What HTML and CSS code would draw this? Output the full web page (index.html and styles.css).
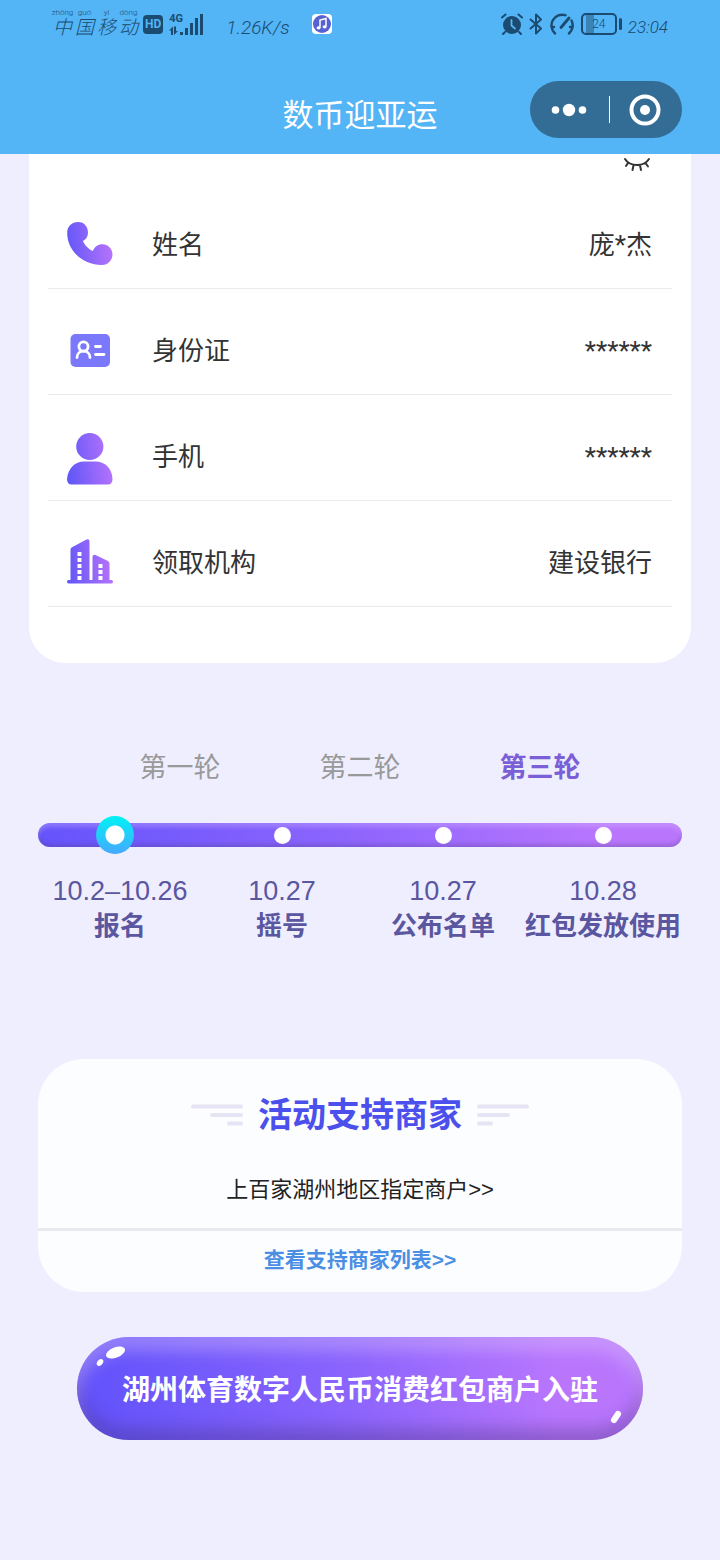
FILE: index.html
```html
<!DOCTYPE html>
<html lang="zh-CN">
<head>
<meta charset="utf-8">
<meta name="viewport" content="width=device-width, initial-scale=1">
<title>数币迎亚运</title>
<link rel="stylesheet" href="styles.css">
</head>
<body>
<header class="header">
  <div class="status">
    <div class="status-group">
      <div class="carrier">
        <span class="syllable"><small>zhōng</small><b>中</b></span>
        <span class="syllable"><small>guó</small><b>国</b></span>
        <span class="syllable"><small>yí</small><b>移</b></span>
        <span class="syllable"><small>dòng</small><b>动</b></span>
      </div>
      <span class="hd">HD</span>
      <div class="signal">
        <span class="signal-type">4G</span>
        <svg class="signal-bars" width="34" height="22" viewBox="0 0 34 22" fill="#1b4b70">
          <path d="M0 17.500l4-4V22H2v-4.500zM5 13.500h2V18h2l-4 4zM11 19h3v3h-3zM16 15h3v7h-3zM21 10h3v12h-3zM26 5h3v17h-3zM31 1h3v21h-3z"/>
        </svg>
      </div>
      <span class="speed">1.26K/s</span>
      <svg class="music" width="20" height="20" viewBox="0 0 20 20">
        <rect width="20" height="20" rx="4" fill="#fff"/>
        <circle cx="10" cy="10" r="9" fill="#5662d2"/>
        <path d="M8 13.500V6l6-1.500v8" fill="none" stroke="#fff" stroke-width="1.500"/>
        <ellipse cx="6.600" cy="13.800" rx="2" ry="1.600" fill="#fff"/>
        <ellipse cx="12.600" cy="12.800" rx="2" ry="1.600" fill="#fff"/>
      </svg>
    </div>
    <div class="status-group status-right">
      <svg width="22" height="22" viewBox="0 0 22 22" fill="none" stroke="#1b4b70" stroke-linecap="round">
        <circle cx="11" cy="12" r="9" fill="#1b4b70" stroke="none"/>
        <path d="M1 4.500L4.500 1.500M21 4.500L17.500 1.500M4 19l-2 2M18 19l2 2" stroke-width="2"/>
        <path d="M10.500 7v5.500l3.500 3" stroke="#53b4f6" stroke-width="1.800"/>
      </svg>
      <svg width="14" height="22" viewBox="0 0 14 22" fill="none" stroke="#1b4b70" stroke-width="2" stroke-linecap="round" stroke-linejoin="round">
        <path d="M1.500 6.500L12 15.500 7 20.500V1.500L12 6.500 1.500 15.500"/>
      </svg>
      <svg width="26" height="22" viewBox="0 0 26 22" fill="none" stroke="#1b4b70" stroke-width="2.400" stroke-linecap="round">
        <path d="M6 20.500A10.800 10.800 0 0 1 16.500 2.200M22.500 7.500A10.800 10.800 0 0 1 20 20.500M2.500 14h2.500M21 14h2.500"/>
        <path d="M12 14.500L20 5" stroke-width="2.800"/>
      </svg>
      <div class="battery"><span class="battery-body">24</span><i class="battery-tip"></i></div>
      <time class="clock">23:04</time>
    </div>
  </div>
  <div class="nav">
    <h1 class="nav-title">数币迎亚运</h1>
    <div class="capsule">
      <button class="capsule-button" type="button" aria-label="更多">
        <svg width="36" height="14" viewBox="0 0 36 14" fill="#fff"><circle cx="4.500" cy="7" r="3.800"/><circle cx="18" cy="7" r="6.200"/><circle cx="31.500" cy="7" r="3.800"/></svg>
      </button>
      <i class="capsule-line"></i>
      <button class="capsule-button" type="button" aria-label="关闭">
        <svg width="32" height="32" viewBox="0 0 32 32" fill="none"><circle cx="16" cy="16" r="13.500" stroke="#fff" stroke-width="4"/><circle cx="16" cy="16" r="5" fill="#fff"/></svg>
      </button>
    </div>
  </div>
</header>
<main>
  <section class="profile">
    <button class="eye" type="button" aria-label="显示信息">
      <svg width="28" height="16" viewBox="0 0 28 16" fill="none" stroke="#333" stroke-width="2" stroke-linecap="round"><path d="M2 3C7 11 21 11 26 3M5 7L3 10M10.500 9.500L9.500 14M17 9.500l1 4.500M22.500 7l2.500 3.500"/></svg>
    </button>
    <ul class="rows">
      <li class="row">
        <svg class="row-icon" width="48" height="48" viewBox="0 0 48 48">
          <defs><linearGradient id="violet" gradientUnits="userSpaceOnUse" x1="1" y1="30" x2="47" y2="24"><stop offset="0" stop-color="#6257f8"/><stop offset="1" stop-color="#b974fb"/></linearGradient></defs>
          <path fill="url(#violet)" d="M1.200 13C1.200 6 6 2 12 2C18.500 2 22 7 22 12.500C22 16.500 20 19.500 17 21C18.500 25 22.500 29 26.800 31C28.500 27 32 24.300 36.500 24.300C42 24.300 46.500 29 46.500 34.500C46.500 40 42 45 36 45C17 45 1.200 31 1.200 13Z"/>
        </svg>
        <span class="label">姓名</span><span class="value">庞*杰</span>
      </li>
      <li class="row">
        <svg class="row-icon" width="48" height="48" viewBox="0 0 48 48">
          <rect x="4.500" y="8" width="39.500" height="33" rx="5" fill="#7b78fb"/>
          <g fill="none" stroke="#fff" stroke-width="2.800" stroke-linecap="round"><circle cx="17.500" cy="20.500" r="4.600"/><path d="M11 31.500C11 23 24 23 24 31.500M29.500 20.500h5M29.500 28.500h8.500"/></g>
        </svg>
        <span class="label">身份证</span><span class="value">******</span>
      </li>
      <li class="row">
        <svg class="row-icon" width="48" height="60" viewBox="0 -6 48 60" fill="url(#violet)">
          <circle cx="23.800" cy="14.500" r="13.600"/>
          <path d="M1 47C2 36 9 29.500 18 29.500H29.500C39 29.500 46 36 46.500 47C46.500 50.500 45 52.500 42 52.500H5.500C2.500 52.500 1 50.500 1 47Z"/>
        </svg>
        <span class="label">手机</span><span class="value">******</span>
      </li>
      <li class="row">
        <svg class="row-icon" width="48" height="48" viewBox="0 1 48 48">
          <path fill="url(#violet)" d="M4.500 12.500Q4.500 11 6 10.200L20.500 2.500Q23.500 1.500 23.500 4.500V43H26.500V19.500Q27 17 29.500 18L42 24Q43.500 25 43.500 26.500V43H45.500Q47 43 47 44.800Q47 46.500 45.500 46.500H2.500Q1 46.500 1 44.800Q1 43 2.500 43H4.500Z"/>
          <path fill="#fff" d="M11.500 15h4v4h-4zM11.500 21h4v4h-4zM11.500 27h4v4h-4zM11.500 33h4v4h-4zM11.500 39h4v4h-4zM32.500 27h4v4h-4zM32.500 33h4v4h-4zM32.500 39h4v4h-4z"/>
        </svg>
        <span class="label">领取机构</span><span class="value">建设银行</span>
      </li>
    </ul>
  </section>

  <nav class="rounds">
    <button class="round" type="button">第一轮</button>
    <button class="round" type="button">第二轮</button>
    <button class="round round-active" type="button">第三轮</button>
  </nav>

  <section class="timeline">
    <div class="track">
      <span class="current"></span><span class="dot"></span><span class="dot"></span><span class="dot"></span>
    </div>
    <ol class="steps">
      <li class="step"><span>10.2–10.26</span><strong>报名</strong></li>
      <li class="step"><span>10.27</span><strong>摇号</strong></li>
      <li class="step"><span>10.27</span><strong>公布名单</strong></li>
      <li class="step"><span>10.28</span><strong>红包发放使用</strong></li>
    </ol>
  </section>

  <section class="merchants">
    <div class="merchants-head">
      <svg width="54" height="24" viewBox="0 0 54 24" stroke="#e6e3f4" stroke-width="4" stroke-linecap="round"><path d="M3 3.500h48M22 12h29M39 20.500h12"/></svg>
      <h2 class="merchants-title">活动支持商家</h2>
      <svg width="54" height="24" viewBox="0 0 54 24" stroke="#e6e3f4" stroke-width="4" stroke-linecap="round"><path d="M3 3.500h48M3 12h29M3 20.500h12"/></svg>
    </div>
    <p class="merchants-text">上百家湖州地区指定商户&gt;&gt;</p>
    <a class="merchants-link" href="#">查看支持商家列表&gt;&gt;</a>
  </section>

  <button class="join" type="button">
    <svg class="shine shine-top" width="30" height="22" viewBox="0 0 30 22" fill="#fff"><ellipse cx="19.500" cy="7.500" rx="10" ry="5.200" transform="rotate(-22 19.500 7.500)"/><ellipse cx="4" cy="17.500" rx="3.800" ry="2.700" transform="rotate(-50 4 17.500)"/></svg>
    湖州体育数字人民币消费红包商户入驻
    <svg class="shine shine-bottom" width="12" height="14" viewBox="0 0 12 14" fill="none" stroke="#fff" stroke-width="6" stroke-linecap="round"><path d="M4 10L8 4"/></svg>
  </button>
</main>
</body>
</html>
```

FILE: styles.css
```css
* { box-sizing: border-box; }

body {
  margin: 0;
  min-height: 100vh;
  background: #efeeff;
  color: #333;
  font-family: Roboto, "Noto Sans CJK SC", sans-serif;
}

button {
  padding: 0;
  border: 0;
  background: none;
  color: inherit;
  font: inherit;
}

ul, ol, h1, h2, p { margin: 0; padding: 0; list-style: none; }
svg { display: block; flex: none; }

.header { background: #53b4f6; }

.status {
  display: flex;
  justify-content: space-between;
  height: 48px;
  padding: 0 52px;
  color: #1b4b70;
}
.status-group { display: flex; align-items: center; }
.status-right { gap: 6px; }
.carrier { display: flex; gap: 1px; font-weight: 300; }
.syllable { display: flex; flex-direction: column; align-items: center; width: 21px; }
.syllable small { font-size: 8px; line-height: 8px; white-space: nowrap; }
.syllable b { font-size: 19px; line-height: 22px; font-weight: 300; font-style: italic; }
.hd {
  margin-left: 4px;
  padding: 0 2px;
  border-radius: 4px;
  background: #1b4b70;
  color: #53b4f6;
  font-size: 12px;
  line-height: 19px;
  font-weight: 700;
}
.signal { display: grid; margin-left: 6px; }
.signal-type, .signal-bars { grid-area: 1 / 1; }
.signal-type { font-size: 11px; line-height: 11px; font-weight: 700; }
.speed { width: 64px; margin: 6px 22px 0 23px; font-size: 19px; font-weight: 300; font-style: italic; white-space: nowrap; }
.battery { display: flex; align-items: center; gap: 2px; }
.battery-body {
  width: 36px;
  border: 2px solid #1b4b70;
  border-radius: 5px;
  background: linear-gradient(90deg, transparent 3px, #3b83b5 3px 11px, transparent 11px);
  font-size: 12px;
  line-height: 18px;
  font-weight: 300;
  text-align: center;
}
.battery-tip { width: 3px; height: 12px; border-radius: 2px; background: #1b4b70; }
.clock { margin-top: 6px; font-size: 17px; font-weight: 300; font-style: italic; }

.nav {
  display: grid;
  grid-template-columns: 1fr auto 1fr;
  align-items: center;
  padding: 33px 38px 16px;
}
.nav-title { grid-column: 2; padding-top: 12px; color: #fff; font-size: 31px; line-height: 40px; font-weight: 400; }
.capsule {
  justify-self: end;
  display: flex;
  align-items: center;
  width: 152px;
  height: 57px;
  border-radius: 29px;
  background: #336d95;
}
.capsule-button { flex: 1; display: grid; place-items: center; height: 100%; }
.capsule-button:first-child { flex: 80; }
.capsule-button:last-child { flex: 71; padding-right: 2px; }
.capsule-line { width: 1px; height: 27px; background: #fff; }

.profile {
  display: flex;
  flex-direction: column;
  margin: 0 29px;
  padding: 0 19px 56px;
  border-radius: 0 0 36px 36px;
  background: #fff;
}
.eye { align-self: flex-end; height: 29px; margin-right: 21px; display: flex; align-items: flex-start; padding-top: 2px; }
.row {
  display: grid;
  grid-template-columns: 66px 1fr auto;
  align-items: center;
  column-gap: 20px;
  height: 106px;
  padding: 16px 20px 0 18px;
  border-bottom: 1px solid #ebebeb;
  font-size: 26px;
  line-height: 40px;
}
.label, .value { padding-top: 3px; }

.rounds {
  display: grid;
  grid-template-columns: repeat(3, 1fr);
  margin: 85px 90px 0;
  font-size: 27px;
  line-height: 40px;
  color: #999;
}
.round-active { color: #7a5fd6; font-weight: 700; }

.timeline { margin: 35px 38px 0; }
.track, .steps { display: grid; grid-template-columns: 164fr 160fr 162fr 158fr; justify-items: center; align-items: center; }
.track {
  grid-template-rows: 24px;
  border-radius: 12px;
  background: linear-gradient(90deg, #6554fb, #8d65fd 48%, #b976fd 88%);
  box-shadow: inset 0 4px 4px rgba(225, 200, 255, 0.3), inset 0 -3px 4px rgba(80, 60, 130, 0.3);
}
.dot { width: 17px; height: 17px; border-radius: 50%; background: #fff; }
.current {
  width: 38px;
  height: 38px;
  margin-right: 10px;
  border-radius: 50%;
  background: radial-gradient(circle, #fff 9px, transparent 10px), linear-gradient(#00f2f5, #45a8ff);
}
.steps { margin-top: 27px; color: #5b56a0; }
.step { display: grid; justify-items: center; white-space: nowrap; }
.step span { font: 27px/34px "Liberation Sans", sans-serif; }
.step strong { font-size: 26px; line-height: 36px; }

.merchants {
  margin: 115px 38px 0;
  border-radius: 46px;
  background: #fcfdff;
  text-align: center;
  font-family: "Liberation Sans", "Noto Sans CJK SC", sans-serif;
}
.merchants-head { display: flex; justify-content: center; align-items: center; gap: 14px; padding-top: 32px; }
.merchants-title { color: #4b50ec; font-size: 34px; line-height: 48px; font-weight: 700; }
.merchants-text { padding: 35px 0 22px; border-bottom: 3px solid #e9e9f0; font-size: 22px; line-height: 32px; color: #222; }
.merchants-link { display: block; padding: 13px 0 16px; color: #4a8fe4; font-size: 21px; line-height: 32px; font-weight: 700; text-decoration: none; }

.join {
  position: relative;
  display: block;
  width: calc(100% - 154px);
  min-height: 103px;
  margin: 45px 77px 40px;
  padding-top: 4px;
  border-radius: 52px;
  background: linear-gradient(90deg, #6554fb 5%, #8d65fd 50%, #b976fd 85%);
  box-shadow: inset 0 14px 16px rgba(230, 205, 255, 0.35), inset 0 -12px 16px rgba(70, 50, 120, 0.35);
  color: #fff;
  font-size: 28px;
  line-height: 40px;
  font-weight: 700;
}
.shine { position: absolute; }
.shine-top { top: 8px; left: 19px; }
.shine-bottom { right: 21px; bottom: 16px; }
```
